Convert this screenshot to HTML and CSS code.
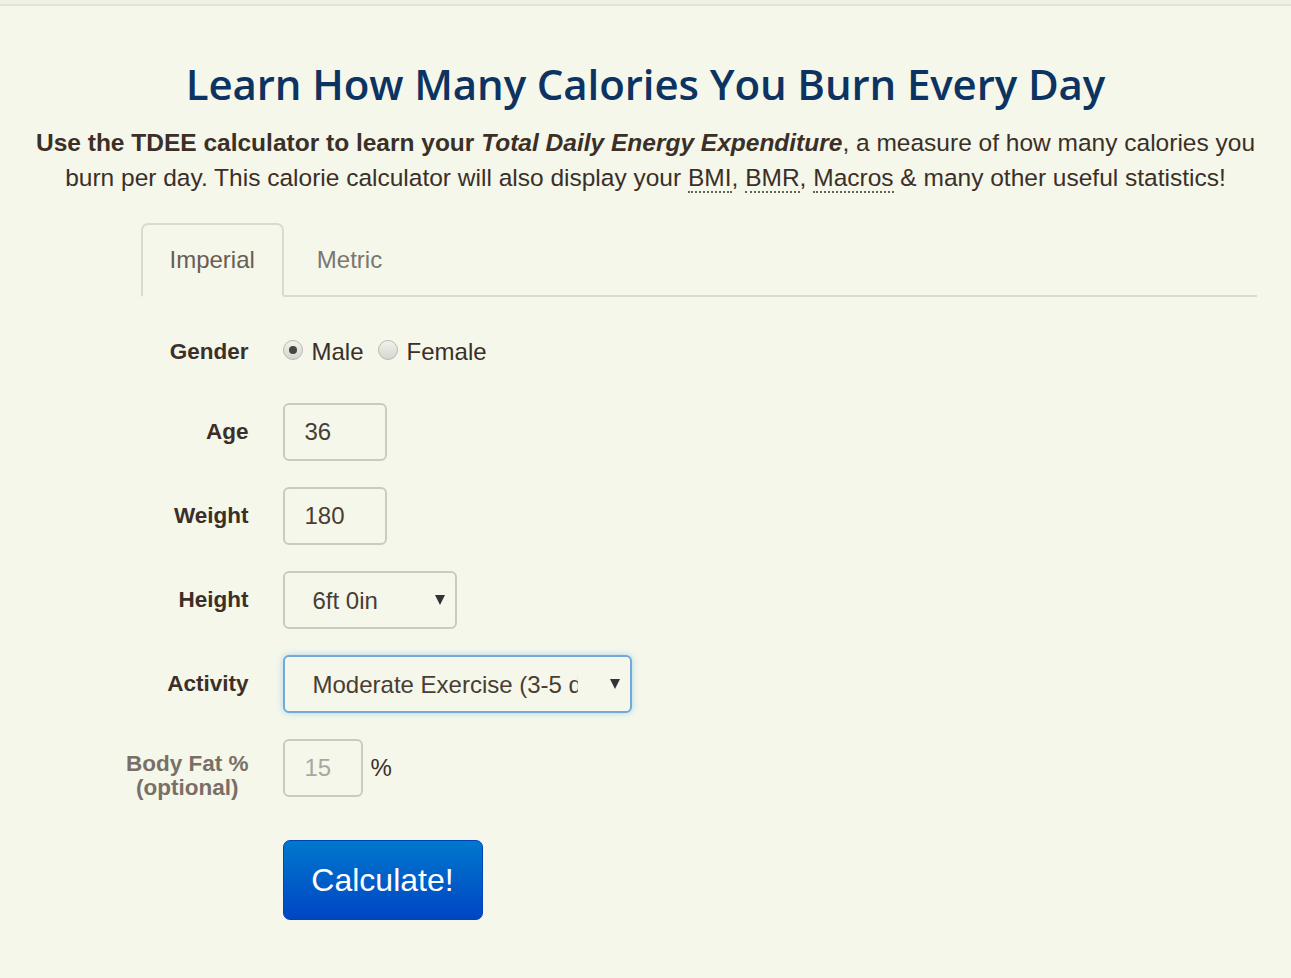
FILE: index.html
```html
<!DOCTYPE html>
<html lang="en">
<head>
    <meta charset="UTF-8">
    <meta name="viewport" content="width=device-width, initial-scale=1.0">
    <title>TDEE Calculator</title>
    <link rel="stylesheet" href="styles.css">
</head>
<body>

<div class="top-bar"></div>

<div class="page">
    <h1>Learn How Many Calories You Burn Every Day</h1>
    <p class="intro">
        <strong>Use the TDEE calculator to learn your <em>Total Daily Energy Expenditure</em></strong>, a measure of how many calories you
        burn per day. This calorie calculator will also display your <abbr title="Body Mass Index">BMI</abbr>, <abbr title="Basal Metabolic Rate">BMR</abbr>, <abbr title="Macronutrients">Macros</abbr> &amp; many other useful statistics!
    </p>

    <div class="calc">
        <ul class="tabs">
            <li class="active">Imperial</li>
            <li>Metric</li>
        </ul>

        <form class="calc-form">
            <div class="row row-gender">
                <label class="row-label">Gender</label>
                <div class="controls">
                    <label class="radio"><input type="radio" name="gender" checked> Male</label>
                    <label class="radio"><input type="radio" name="gender"> Female</label>
                </div>
            </div>

            <div class="row">
                <label class="row-label" for="age">Age</label>
                <div class="controls">
                    <input type="text" id="age" class="field field-sm" value="36">
                </div>
            </div>

            <div class="row">
                <label class="row-label" for="weight">Weight</label>
                <div class="controls">
                    <input type="text" id="weight" class="field field-sm" value="180">
                </div>
            </div>

            <div class="row">
                <label class="row-label" for="height">Height</label>
                <div class="controls">
                    <span class="select-wrap">
                        <select id="height" class="field field-md">
                            <option>6ft 0in</option>
                        </select>
                    </span>
                </div>
            </div>

            <div class="row">
                <label class="row-label" for="activity">Activity</label>
                <div class="controls">
                    <span class="select-wrap">
                        <select id="activity" class="field field-lg focused">
                            <option>Moderate Exercise (3-5 days/week)</option>
                        </select>
                    </span>
                </div>
            </div>

            <div class="row">
                <label class="row-label muted" for="bodyfat"><span>Body Fat %<br>(optional)</span></label>
                <div class="controls">
                    <input type="text" id="bodyfat" class="field field-xs" placeholder="15">
                    <span class="unit">%</span>
                </div>
            </div>

            <div class="row row-submit">
                <span class="row-label"></span>
                <div class="controls">
                    <button type="button" class="btn-calc">Calculate!</button>
                </div>
            </div>
        </form>
    </div>
</div>

</body>
</html>
```

FILE: styles.css
```css
body {
    margin: 0;
    background-color: #f4f7ea;
    font-family: "Liberation Sans", Arial, sans-serif;
    color: #3b2f27;
}
.top-bar {
    height: 4px;
    background-color: #eef1e3;
    border-bottom: 2px solid #e1e5d6;
}
.page {
    width: 1240px;
    margin: 0 auto;
}
h1 {
    font-family: "Open Sans", sans-serif;
    font-weight: 600;
    font-size: 42px;
    line-height: 56px;
    color: #0c3361;
    text-align: center;
    margin: 50px 0 13px;
    letter-spacing: -0.1px;
}
.intro {
    font-size: 24.5px;
    line-height: 35px;
    text-align: center;
    margin: 0;
}
.intro abbr {
    text-decoration: none;
    border-bottom: 2px dotted #6b6057;
}
.calc {
    width: 1148px;
    margin: 28px 0 0 83px;
}
.tabs {
    list-style: none;
    margin: 0 0 0 32px;
    padding: 0;
    display: flex;
    border-bottom: 2px solid #d9dbce;
}
.tabs li {
    font-size: 24px;
    color: #7b7670;
    padding: 0 27px;
    height: 70px;
    line-height: 70px;
    margin-bottom: -2px;
    border: 2px solid transparent;
    border-radius: 7px 7px 0 0;
    margin-right: 4px;
}
.tabs li.active {
    color: #6a5d53;
    border-color: #d9dbce;
    border-bottom-color: #f4f7ea;
}
.calc-form {
    display: flex;
    flex-direction: column;
    gap: 26px;
    margin-top: 30px;
}
.row {
    display: flex;
    align-items: center;
}
.row-gender {
    height: 50px;
}
.row-submit {
    margin-top: 17px;
}
.row-label {
    width: 140px;
    flex-shrink: 0;
    margin-right: 34px;
    text-align: right;
    font-weight: bold;
    font-size: 22.5px;
    white-space: nowrap;
}
.row-label.muted {
    color: #7a6f66;
    line-height: 24px;
    padding-top: 8px;
    margin-bottom: -8px;
}
.row-label.muted span {
    display: inline-block;
    text-align: center;
}
.controls {
    display: flex;
    align-items: center;
}
.radio {
    display: flex;
    align-items: center;
    font-size: 24px;
    margin-right: 14px;
}
.radio input {
    appearance: none;
    width: 20px;
    height: 20px;
    margin: 0 9px 4px 0;
    border-radius: 50%;
    border: 1px solid #b9b9b0;
    background: linear-gradient(#f2f2ee, #d6d6d0);
    position: relative;
}
.radio input:checked::after {
    content: "";
    position: absolute;
    left: 5px;
    top: 5px;
    width: 8px;
    height: 8px;
    border-radius: 50%;
    background-color: #4a4540;
}
.field {
    box-sizing: border-box;
    height: 58px;
    font-family: "Liberation Sans", Arial, sans-serif;
    font-size: 24px;
    color: #4a3d33;
    background-color: #f4f7ea;
    border: 2px solid #cacbbf;
    border-radius: 6px;
    padding: 0 20px;
    outline: none;
}
.field::placeholder {
    color: #a8a8a0;
}
.field-xs {
    width: 80px;
}
.field-sm {
    width: 104px;
}
.field-md {
    width: 174px;
}
.field-lg {
    width: 349px;
}
select.field {
    appearance: none;
    padding: 0 52px 0 28px;
}
.field.focused {
    border-color: #72a9d9;
    box-shadow: 0 0 6px rgba(82, 168, 236, 0.45);
}
.select-wrap {
    position: relative;
    display: inline-block;
}
.select-wrap::after {
    content: "";
    position: absolute;
    right: 12px;
    top: 24px;
    border-left: 5px solid transparent;
    border-right: 5px solid transparent;
    border-top: 10px solid #333;
    pointer-events: none;
}
.unit {
    font-size: 24px;
    margin-left: 8px;
}
.btn-calc {
    width: 200px;
    height: 80px;
    font-family: "Liberation Sans", Arial, sans-serif;
    font-size: 32px;
    color: #fff;
    background: linear-gradient(#0078cd, #0045c4);
    border: 1px solid #0043b8;
    border-radius: 7px;
    cursor: pointer;
    padding: 0;
}
```
